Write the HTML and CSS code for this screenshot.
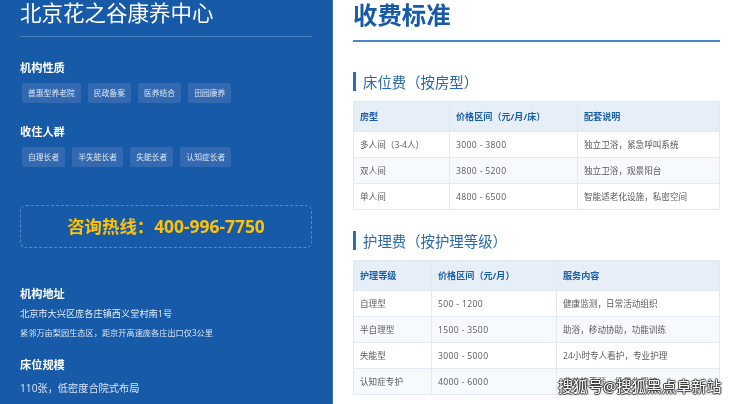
FILE: index.html
```html
<!DOCTYPE html>
<html lang="zh-CN">
<head>
<meta charset="utf-8">
<title>北京花之谷康养中心</title>
<link rel="stylesheet" href="styles.css">
</head>
<body>
<div class="page">
  <aside class="side">
    <h1 class="brand">北京花之谷康养中心</h1>
    <section class="group group-first">
      <h2 class="label">机构性质</h2>
      <div class="tags">
        <span class="tag">普惠型养老院</span><span class="tag">民政备案</span><span class="tag">医养结合</span><span class="tag">田园康养</span>
      </div>
    </section>
    <section class="group group-second">
      <h2 class="label">收住人群</h2>
      <div class="tags">
        <span class="tag">自理长者</span><span class="tag">半失能长者</span><span class="tag">失能长者</span><span class="tag">认知症长者</span>
      </div>
    </section>
    <div class="hotline">咨询热线：400-996-7750</div>
    <section class="info">
      <h2 class="label">机构地址</h2>
      <p class="addr">北京市大兴区庞各庄镇西义堂村南1号</p>
      <p class="note">紧邻万亩梨园生态区，距京开高速庞各庄出口仅3公里</p>
    </section>
    <section class="info info-beds">
      <h2 class="label">床位规模</h2>
      <p class="beds">110张，低密度合院式布局</p>
    </section>
  </aside>
  <main class="main">
    <h1 class="title">收费标准</h1>
    <h2 class="sub sub-first">床位费（按房型）</h2>
    <table class="fee room">
      <colgroup><col class="r1"><col class="r2"><col></colgroup>
      <thead><tr><th>房型</th><th>价格区间（元/月/床）</th><th>配套说明</th></tr></thead>
      <tbody>
        <tr><td>多人间（3-4人）</td><td>3000 - 3800</td><td>独立卫浴，紧急呼叫系统</td></tr>
        <tr><td>双人间</td><td>3800 - 5200</td><td>独立卫浴，观景阳台</td></tr>
        <tr><td>单人间</td><td>4800 - 6500</td><td>智能适老化设施，私密空间</td></tr>
      </tbody>
    </table>
    <h2 class="sub sub-second">护理费（按护理等级）</h2>
    <table class="fee care">
      <colgroup><col class="c1"><col class="c2"><col></colgroup>
      <thead><tr><th>护理等级</th><th>价格区间（元/月）</th><th>服务内容</th></tr></thead>
      <tbody>
        <tr><td>自理型</td><td>500 - 1200</td><td>健康监测，日常活动组织</td></tr>
        <tr><td>半自理型</td><td>1500 - 3500</td><td>助浴，移动协助，功能训练</td></tr>
        <tr><td>失能型</td><td>3000 - 5000</td><td>24小时专人看护，专业护理</td></tr>
        <tr><td>认知症专护</td><td>4000 - 6000</td><td>非药物干预，场景化照护</td></tr>
      </tbody>
    </table>
  </main>
  <div class="mark">搜狐号@搜狐黑点阜新站</div>
</div>
</body>
</html>
```
FILE: styles.css
```css
* { box-sizing: border-box; }
html, body { margin: 0; padding: 0; }
body {
  width: 740px;
  height: 404px;
  overflow: hidden;
  background: #fff;
  font-family: "Open Sans", "Noto Sans CJK SC", sans-serif;
}
.page { display: flex; position: relative; width: 740px; height: 404px; overflow: hidden; filter: blur(0.3px); }
h1, h2, p { margin: 0; font-weight: inherit; }

.side {
  width: 333px;
  height: 404px;
  flex: none;
  padding: 0 20px;
  background: #165aa8;
  border-right: 1px solid #3a75b8;
  color: #fff;
}
.brand {
  height: 37px;
  padding-bottom: 11px;
  border-bottom: 1px solid #4a7fbe;
  font-size: 21.5px;
  font-weight: 400;
  line-height: 26px;
}
.label { font-size: 11.2px; font-weight: 700; line-height: 14px; }
.group-first { margin-top: 24px; }
.group-second { margin-top: 22px; }
.tags { display: flex; gap: 7px; margin: 8px 0 0 2px; }
.tag {
  height: 20px;
  padding: 0 6px;
  border-radius: 2px;
  background: #3269b1;
  color: #dbe6f3;
  font-size: 7.8px;
  line-height: 20px;
}
.hotline {
  height: 43px;
  margin-top: 38px;
  border: 1px dashed #5a8ac4;
  border-radius: 6px;
  color: #ffc107;
  font-size: 17.4px;
  font-weight: 700;
  line-height: 41px;
  text-align: center;
}
.info { margin-top: 39px; }
.addr { margin-top: 6px; color: #e3ebf5; font-size: 9.2px; line-height: 14px; }
.note { margin-top: 6px; color: #dce6f2; font-size: 8.2px; line-height: 12px; }
.info-beds { margin-top: 19px; }
.beds { margin-top: 9px; color: #dce6f2; font-size: 10.2px; line-height: 14px; }

.main { width: 367px; margin-left: 20px; flex: none; }
.title {
  height: 42px;
  border-bottom: 2px solid #4a86c8;
  color: #165aa8;
  font-size: 24.4px;
  font-weight: 700;
  line-height: 30px;
}
.sub {
  height: 19px;
  padding-left: 7px;
  border-left: 3px solid #2a6ebb;
  color: #2a68b0;
  font-size: 14.4px;
  font-weight: 400;
  line-height: 21px;
}
.sub-first { margin-top: 30px; }
.sub-second { margin-top: 21px; }
.fee {
  width: 367px;
  margin-top: 10px;
  border-collapse: collapse;
  table-layout: fixed;
  font-size: 8.6px;
}
.fee th, .fee td {
  padding: 0 6px;
  border: 1px solid #e2e9f2;
  text-align: left;
  white-space: nowrap;
}
.fee th {
  height: 30px;
  padding-bottom: 2px;
  background: #e6eef7;
  color: #1a5fa8;
  font-size: 9.1px;
  font-weight: 700;
}
.fee td { height: 26px; color: #5a5a5a; }
.fee td:nth-child(2) { letter-spacing: 0.35px; }
.fee tbody tr:nth-child(even) td { background: #f7fafd; }
.r1 { width: 96px; }
.r2 { width: 128px; }
.c1 { width: 78px; }
.c2 { width: 125px; }

.mark {
  position: absolute;
  left: 558px;
  top: 376px;
  color: #fff;
  font-size: 15px;
  line-height: 20px;
  text-shadow: 1px 0 1px #333, -1px 0 1px #333, 0 1px 1px #333, 0 -1px 1px #333;
  white-space: nowrap;
}
```
